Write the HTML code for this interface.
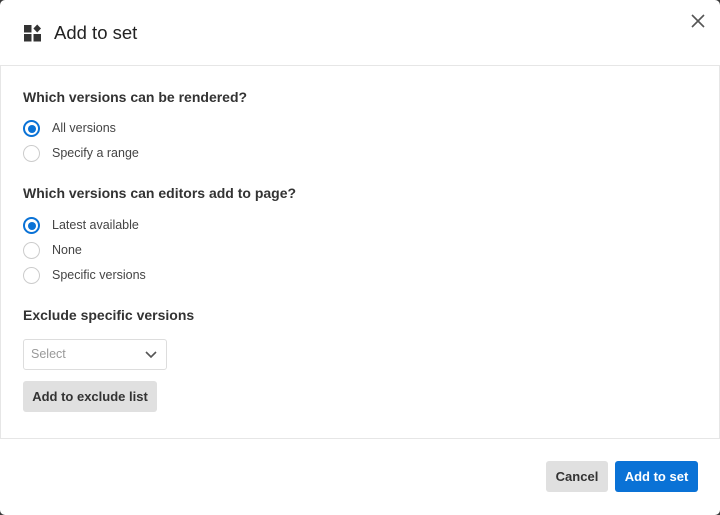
<!DOCTYPE html>
<html><head><style>
body{margin:0;width:720px;height:515px;background:#3a3a3a;font-family:"Liberation Sans",sans-serif;overflow:hidden;position:relative}
.m{position:absolute;left:0;top:0;width:720px;height:515px;background:#fff;border-radius:5px}
.t{position:absolute;left:54px;top:22px;font-size:18.5px;color:#222}
.x{position:absolute;left:691px;top:14px}
.b{position:absolute;left:0;top:65px;width:718px;height:372px;border:1px solid #e6e6e6}
.h{position:absolute;left:23px;font-size:14px;font-weight:bold;color:#333}
.r{position:absolute;left:23px;width:17px;height:17px;border:1px solid #ccc;border-radius:50%;box-sizing:border-box}
.r.on{border:2px solid #0a72d6}
.r.on::after{content:"";position:absolute;left:2.5px;top:2.5px;width:8px;height:8px;border-radius:50%;background:#0a72d6}
.l{position:absolute;left:52px;font-size:12.5px;color:#444}
.btn{position:absolute;border-radius:3px;font-size:13px;font-weight:bold;text-align:center;line-height:31px}
</style></head><body>
<div class="m">
<svg style="position:absolute;left:24px;top:24px" width="18" height="18" viewBox="0 0 18 18"><rect x="0" y="1" width="7.5" height="7.5" fill="#333"/><rect x="0" y="10" width="7.5" height="7.5" fill="#333"/><rect x="9.5" y="10" width="7.5" height="7.5" fill="#333"/><path d="M13.2 0.5 L17 4.5 L13.2 8.5 L9.4 4.5Z" fill="#333"/></svg>
<div class="t">Add to set</div>
<svg class="x" width="14" height="14" viewBox="0 0 14 14"><path d="M1 1L13 13M13 1L1 13" stroke="#555" stroke-width="1.6"/></svg>
<div class="b"></div>
<div class="h" style="top:89px">Which versions can be rendered?</div>
<div class="r on" style="top:120px"></div><div class="l" style="top:121px">All versions</div>
<div class="r" style="top:145px"></div><div class="l" style="top:146px">Specify a range</div>
<div class="h" style="top:185px">Which versions can editors add to page?</div>
<div class="r on" style="top:217px"></div><div class="l" style="top:218px">Latest available</div>
<div class="r" style="top:242px"></div><div class="l" style="top:243px">None</div>
<div class="r" style="top:267px"></div><div class="l" style="top:268px">Specific versions</div>
<div class="h" style="top:307px">Exclude specific versions</div>
<div style="position:absolute;left:23px;top:339px;width:144px;height:31px;border:1px solid #ddd;border-radius:3px;box-sizing:border-box"><span style="position:absolute;left:7px;top:7px;font-size:12.5px;color:#999">Select</span><svg style="position:absolute;left:121px;top:10px" width="12" height="9" viewBox="0 0 12 9"><path d="M1 2L6 7L11 2" stroke="#555" stroke-width="1.6" fill="none"/></svg></div>
<div class="btn" style="left:23px;top:381px;width:134px;height:31px;background:#e0e0e0;color:#333">Add to exclude list</div>
<div class="btn" style="left:546px;top:461px;width:62px;height:31px;background:#e0e0e0;color:#333">Cancel</div>
<div class="btn" style="left:615px;top:461px;width:83px;height:31px;background:#0a72d6;color:#fff">Add to set</div>
</div>
</body></html>
